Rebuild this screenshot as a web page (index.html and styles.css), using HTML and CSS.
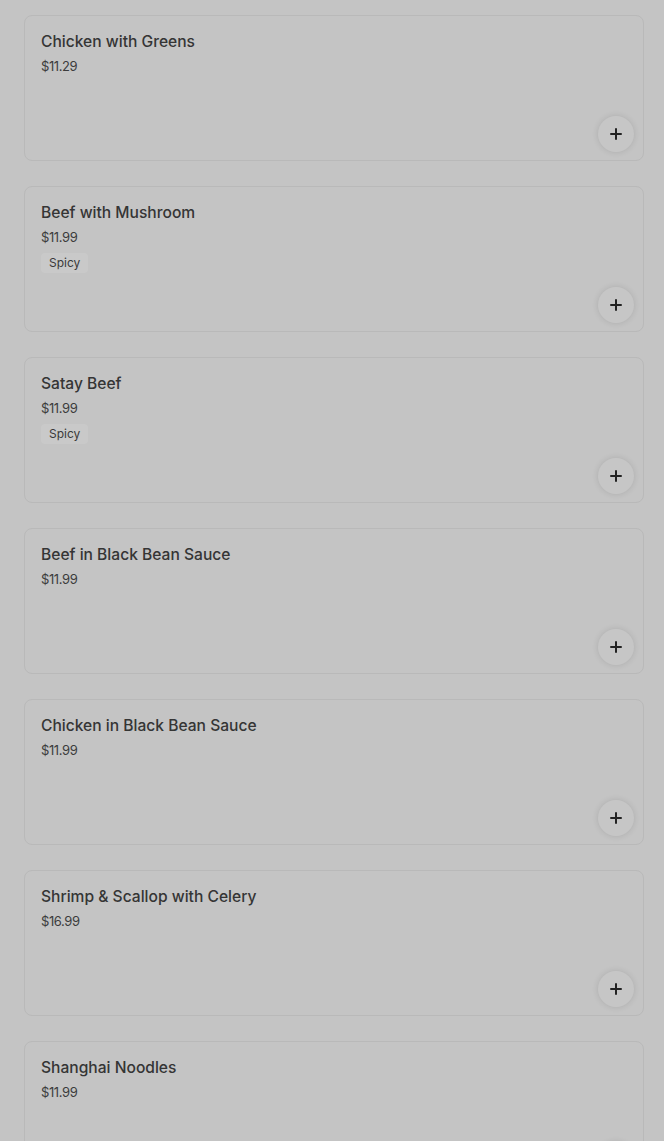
FILE: index.html
```html
<!DOCTYPE html>
<html lang="en">
<head>
  <meta charset="UTF-8">
  <meta name="viewport" content="width=device-width, initial-scale=1.0">
  <title>Menu</title>
  <link rel="stylesheet" href="styles.css">
</head>
<body>
  <div class="menu">
    <div class="item">
      <div class="name">Chicken with Greens</div>
      <div class="price">$11.29</div>
      <button class="add"><span class="plus"></span></button>
    </div>
    <div class="item">
      <div class="name">Beef with Mushroom</div>
      <div class="price">$11.99</div>
      <span class="tag">Spicy</span>
      <button class="add"><span class="plus"></span></button>
    </div>
    <div class="item">
      <div class="name">Satay Beef</div>
      <div class="price">$11.99</div>
      <span class="tag">Spicy</span>
      <button class="add"><span class="plus"></span></button>
    </div>
    <div class="item">
      <div class="name">Beef in Black Bean Sauce</div>
      <div class="price">$11.99</div>
      <button class="add"><span class="plus"></span></button>
    </div>
    <div class="item">
      <div class="name">Chicken in Black Bean Sauce</div>
      <div class="price">$11.99</div>
      <button class="add"><span class="plus"></span></button>
    </div>
    <div class="item">
      <div class="name">Shrimp &amp; Scallop with Celery</div>
      <div class="price">$16.99</div>
      <button class="add"><span class="plus"></span></button>
    </div>
    <div class="item">
      <div class="name">Shanghai Noodles</div>
      <div class="price">$11.99</div>
      <button class="add"><span class="plus"></span></button>
    </div>
  </div>
</body>
</html>
```
FILE: styles.css
```css
*{
  margin: 0;
  padding: 0;
  box-sizing: border-box;
}
html, body{
  background: #c4c4c4;
  overflow: hidden;
}
body{
  font-family: Inter, "Noto Sans", sans-serif;
  color: #363636;
}
.menu{
  display: flex;
  flex-direction: column;
  gap: 25px;
  padding: 15px 20px 0 24px;
}
.item{
  display: flex;
  flex-direction: column;
  align-items: flex-start;
  height: 146px;
  flex-shrink: 0;
  padding: 16px 9px 8px 16px;
  border: 1px solid #b9b9b9;
  border-radius: 8px;
  background: #c4c4c4;
}
.name{
  font-size: 15.6px;
  font-weight: 500;
  line-height: 20px;
  color: #353535;
}
.price{
  margin-top: 5px;
  font-size: 13px;
  line-height: 18px;
  color: #3c3c3c;
  letter-spacing: -0.4px;
}
.tag{
  margin-top: 7px;
  padding: 0 8px;
  font-size: 12px;
  line-height: 20px;
  border-radius: 4px;
  background: #c9c9c9;
  color: #3a3a3a;
}
.add{
  margin-top: auto;
  align-self: flex-end;
  width: 36px;
  height: 36px;
  border: none;
  border-radius: 50%;
  background: #c6c6c6;
  box-shadow: 0 0 6px rgba(0,0,0,0.12);
  display: flex;
  align-items: center;
  justify-content: center;
}
.plus{
  position: relative;
  width: 12px;
  height: 12px;
}
.plus::before,
.plus::after{
  content: "";
  position: absolute;
  background: #222;
  border-radius: 1px;
}
.plus::before{
  left: 0;
  top: 5px;
  width: 12px;
  height: 2.4px;
}
.plus::after{
  left: 5px;
  top: 0;
  width: 2.4px;
  height: 12px;
}
```
